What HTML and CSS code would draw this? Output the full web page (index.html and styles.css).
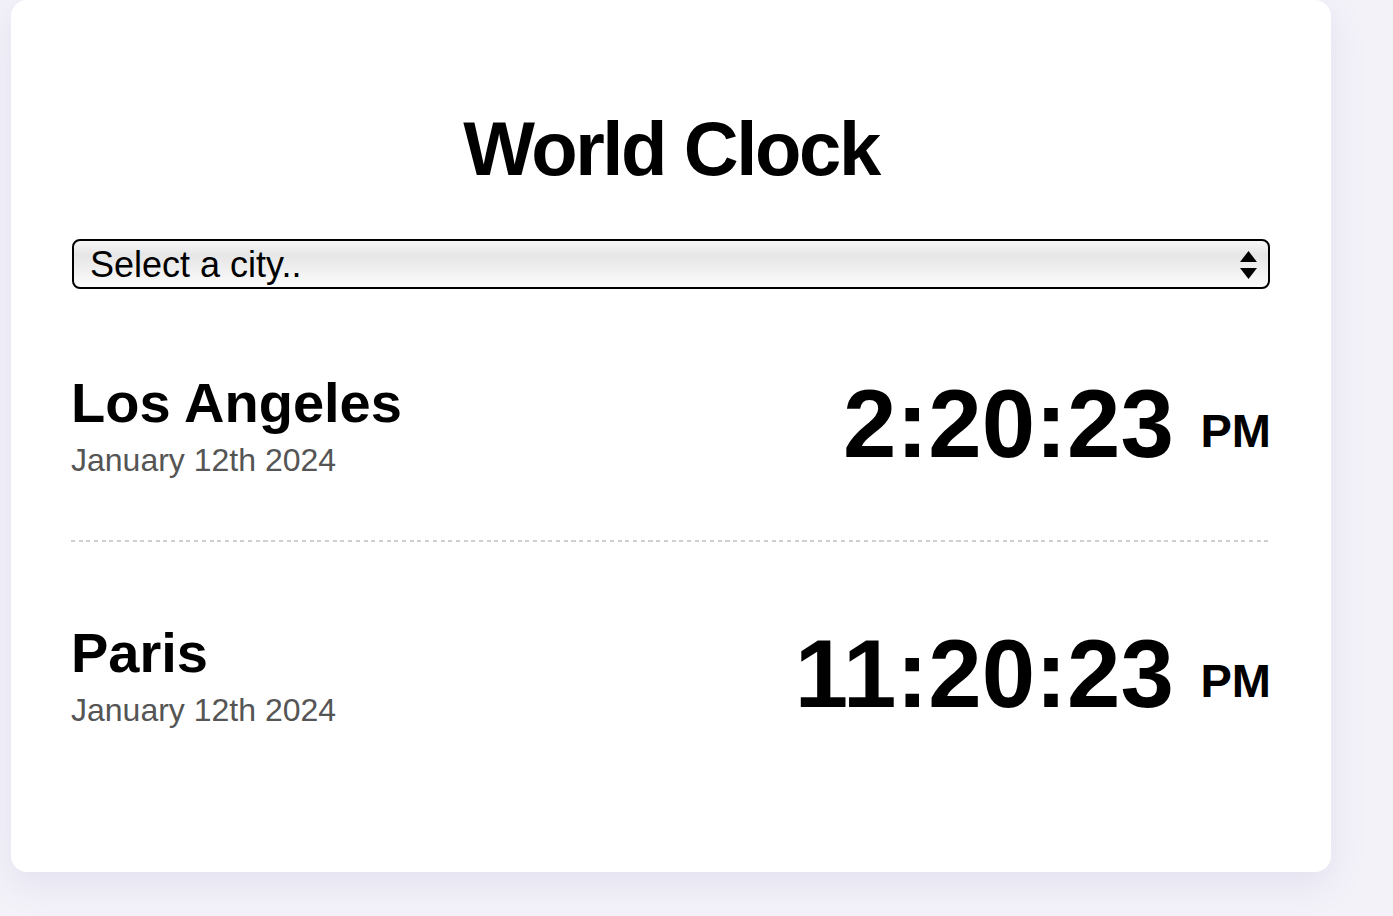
FILE: index.html
```html
<!DOCTYPE html>
<html lang="en">
<head>
<meta charset="utf-8">
<title>World Clock</title>
<link rel="stylesheet" href="styles.css">
</head>
<body>
  <div class="card">
    <h1 class="title">World Clock</h1>
    <div class="select-wrap">
      <select class="city-select">
        <option>Select a city..</option>
      </select>
      <svg class="select-arrows" width="17" height="29" viewBox="0 0 17 29" aria-hidden="true">
        <polygon points="8.5,0 17,11 0,11" fill="#000"/>
        <polygon points="0,17 17,17 8.5,28" fill="#000"/>
      </svg>
    </div>
    <div class="city">
      <div class="city-info">
        <div class="city-name">Los Angeles</div>
        <div class="city-date">January 12th 2024</div>
      </div>
      <div class="city-time">2:20:23 <small class="ampm">PM</small></div>
    </div>
    <div class="city">
      <div class="city-info">
        <div class="city-name">Paris</div>
        <div class="city-date">January 12th 2024</div>
      </div>
      <div class="city-time">11:20:23 <small class="ampm">PM</small></div>
    </div>
  </div>
</body>
</html>
```

FILE: styles.css
```css
html, body {
  margin: 0;
  padding: 0;
}
body {
  background: #f3f2f9;
  font-family: "Liberation Sans", Arial, Helvetica, sans-serif;
  color: #000;
  height: 916px;
  overflow: hidden;
}
.card {
  margin-left: 11px;
  width: 1320px;
  height: 872px;
  box-sizing: border-box;
  background: #fff;
  border-radius: 16px;
  box-shadow: 0 12px 36px rgba(90, 80, 150, 0.10);
  padding: 105px 60px 0 60px;
}
.title {
  margin: 0 0 47px 0;
  font-size: 76px;
  letter-spacing: -2.4px;
  font-weight: bold;
  text-align: center;
  line-height: normal;
}
.select-wrap {
  position: relative;
  margin: 0 1px;
}
.city-select {
  appearance: none;
  -webkit-appearance: none;
  display: block;
  width: 100%;
  height: 50px;
  box-sizing: border-box;
  border: 2px solid #000;
  border-radius: 8px;
  background: linear-gradient(to bottom, #f7f7f7 0%, #e6e6e6 30%, #efefef 60%, #fcfcfc 100%);
  font-family: "Liberation Sans", Arial, Helvetica, sans-serif;
  font-size: 36px;
  color: #000;
  padding: 0 0 0 16px;
  outline: none;
}
.select-arrows {
  position: absolute;
  right: 13px;
  top: 12px;
}
.city {
  display: flex;
  justify-content: space-between;
  align-items: center;
  margin-top: 20px;
  padding: 60px 0 63px 0;
  background-image: repeating-linear-gradient(to right, #cfcfcf 0 4px, transparent 4px 7.7px);
  background-size: 100% 2px;
  background-repeat: no-repeat;
  background-position: left bottom;
}
.city + .city {
  margin-top: 17px;
}
.city:last-child {
  background-image: none;
}
.city-info {
  display: flex;
  flex-direction: column;
}
.city-name {
  font-size: 56px;
  font-weight: bold;
  line-height: normal;
}
.city-date {
  margin-top: 7px;
  font-size: 32px;
  color: #555;
  line-height: normal;
}
.city-time {
  font-size: 96px;
  font-weight: bold;
  line-height: normal;
  white-space: nowrap;
}
.ampm {
  font-size: 47px;
  vertical-align: 10px;
}
```
